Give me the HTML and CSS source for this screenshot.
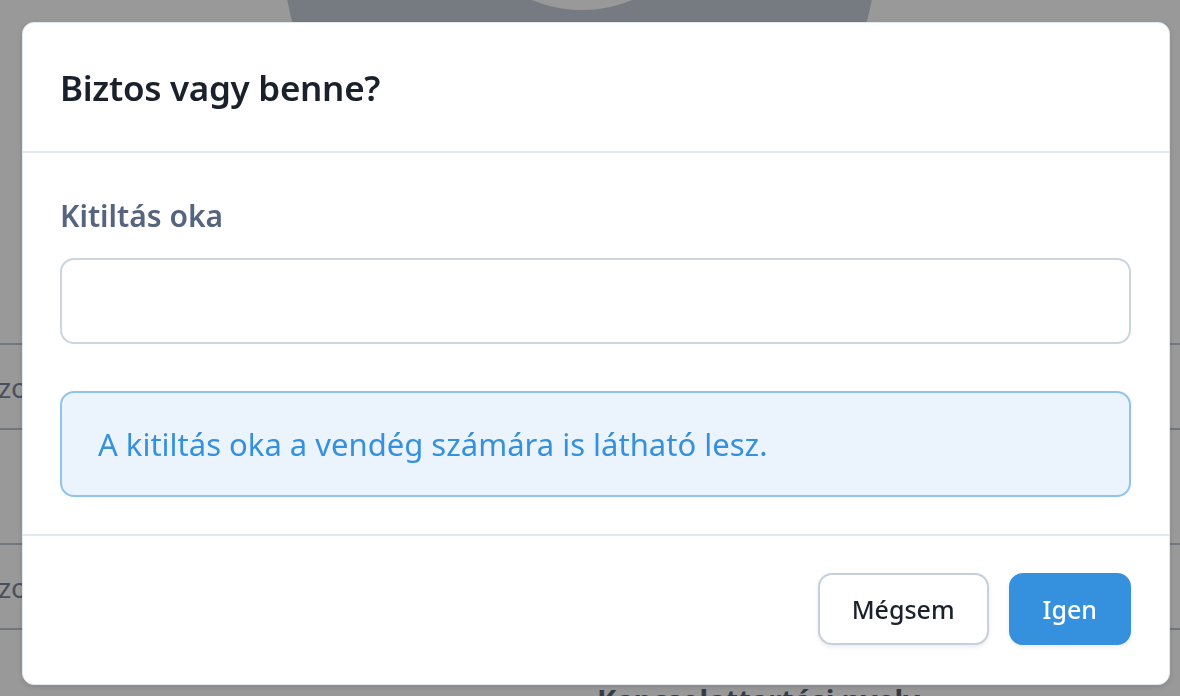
FILE: index.html
```html
<!DOCTYPE html>
<html lang="hu">
<head>
<meta charset="utf-8">
<title>Biztos vagy benne?</title>
<link rel="stylesheet" href="styles.css">
</head>
<body>
<div class="page">
  <div class="avatar"></div>
  <div class="rows">
    <div class="row"><span class="cell-label">Azonosító</span></div>
    <div class="row tall"></div>
    <div class="row"><span class="cell-label">Azonosító</span></div>
    <div class="row short"></div>
  </div>
  <div class="section-title">Kapcsolattartási nyelv</div>
</div>

<div class="overlay"></div>

<div class="modal" role="dialog" aria-modal="true">
  <header class="modal-header">
    <h2 class="modal-title">Biztos vagy benne?</h2>
  </header>
  <div class="modal-body">
    <label class="field-label" for="reason">Kitiltás oka</label>
    <input class="field-input" id="reason" type="text">
    <div class="alert">A kitiltás oka a vendég számára is látható lesz.</div>
  </div>
  <footer class="modal-footer">
    <button class="btn btn-secondary" type="button">Mégsem</button>
    <button class="btn btn-primary" type="button">Igen</button>
  </footer>
</div>
</body>
</html>
```

FILE: styles.css
```css
* { box-sizing: border-box; }

html, body {
  margin: 0;
  padding: 0;
  background: #ffffff;
  overflow: hidden;
  font-family: "Noto Sans", "Open Sans", sans-serif;
}

body { width: 1180px; height: 696px; }

/* background page */
.page {
  width: 1180px;
  height: 696px;
  overflow: hidden;
}

.avatar {
  width: 595px;
  height: 595px;
  margin: -353px 0 0 282px;
  border-radius: 50%;
  background: radial-gradient(circle 130px at 300px 233px, #ffffff 129.5px, #c5ced9 130.5px);
}

.rows {
  margin-top: 101px;
}

.row {
  height: 85px;
  border-top: 2px solid #bcc4d0;
  display: flex;
  align-items: center;
}

.row.tall { height: 115px; }
.row.short { height: 40px; }

.cell-label {
  font-size: 28px;
  color: #7d879a;
  text-indent: -20px;
  display: block;
}

.section-title {
  margin: 12px 0 0 597px;
  font-size: 29px;
  font-weight: 700;
  color: #5a6477;
}

/* overlay and modal */
.overlay {
  position: fixed;
  inset: 0;
  background: rgba(0, 0, 0, 0.4);
}

.modal {
  position: fixed;
  top: 22px;
  left: 22px;
  width: 1148px;
  height: 663px;
  background: #ffffff;
  border: 1px solid #e2e8f0;
  border-radius: 12px;
  box-shadow: 0 2px 6px rgba(0, 0, 0, 0.12);
  display: flex;
  flex-direction: column;
}

.modal-header {
  height: 130px;
  padding: 0 38px 0 37px;
  border-bottom: 2px solid #e2e8f0;
  display: flex;
  align-items: center;
}

.modal-title {
  margin: 0;
  font-size: 35px;
  font-weight: 600;
  color: #1a202c;
  letter-spacing: -0.3px;
}

.modal-body {
  height: 383px;
  padding: 43px 38px 0 37px;
  border-bottom: 2px solid #e2e8f0;
  display: flex;
  flex-direction: column;
}

.field-label {
  font-size: 30px;
  line-height: 40px;
  font-weight: 600;
  color: #56657f;
}

.field-input {
  margin-top: 22px;
  height: 86px;
  width: 100%;
  border: 2px solid #cbd5e0;
  border-radius: 14px;
  background: #ffffff;
  font-family: inherit;
  font-size: 26px;
  padding: 0 20px;
  outline: none;
}

.alert {
  margin-top: 47px;
  height: 106px;
  border: 2px solid #90c4f0;
  border-radius: 14px;
  background: #ebf4fd;
  color: #3590dd;
  font-size: 31px;
  display: flex;
  align-items: center;
  padding: 0 36px;
}

.modal-footer {
  flex: 1;
  padding: 37px 38px 0 37px;
  display: flex;
  justify-content: flex-end;
  align-items: flex-start;
  gap: 20px;
}

.btn {
  height: 72px;
  padding: 0 32px;
  border-radius: 14px;
  font-family: inherit;
  font-size: 25px;
  font-weight: 500;
  cursor: pointer;
  box-shadow: 0 2px 4px rgba(0, 0, 0, 0.08);
}

.btn-secondary {
  background: #ffffff;
  border: 2px solid #c5d0de;
  color: #1a202c;
}

.btn-primary {
  background: #3590dd;
  border: 2px solid #3590dd;
  color: #ffffff;
}
```
